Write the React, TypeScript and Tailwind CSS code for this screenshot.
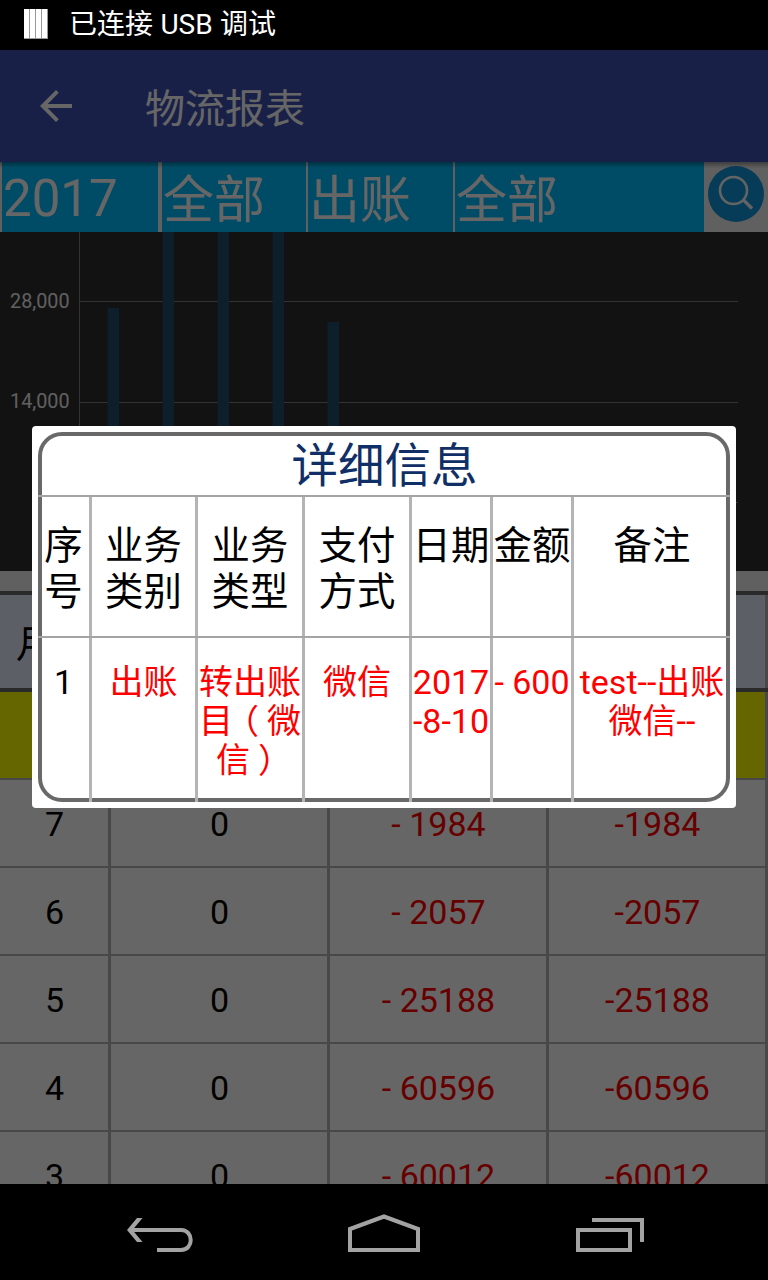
import React from 'react';

const rows = [
  ['7', '0', '- 1984', '-1984'],
  ['6', '0', '- 2057', '-2057'],
  ['5', '0', '- 25188', '-25188'],
  ['4', '0', '- 60596', '-60596'],
  ['3', '0', '- 60012', '-60012'],
];

const headers = [
  { lines: ['序', '号'], w: 'w-[54px]' },
  { lines: ['业务', '类别'], w: 'w-[106px]' },
  { lines: ['业务', '类型'], w: 'w-[107px]' },
  { lines: ['支付', '方式'], w: 'w-[107px]' },
  { lines: ['日期'], w: 'w-[81px]' },
  { lines: ['金额'], w: 'w-[81px]' },
  { lines: ['备注'], w: 'w-[156px]' },
];

const detail = [
  { lines: ['1'], w: 'w-[54px]' },
  { lines: ['出账'], w: 'w-[106px]' },
  { lines: ['转出账', '目（微', '信）'], w: 'w-[107px]' },
  { lines: ['微信'], w: 'w-[107px]' },
  { lines: ['2017', '-8-10'], w: 'w-[81px]' },
  { lines: ['- 600'], w: 'w-[81px]' },
  { lines: ['test--出账', '微信--'], w: 'w-[156px]' },
];

function StatusBar() {
  return (
    <div className="flex h-[50px] shrink-0 items-center bg-black pb-0.5 pl-6 text-[28px] text-white">
      <svg width="24" height="30" className="mr-[21px]">
        {[0, 6, 12, 18].map((x) => (
          <g key={x}>
            <rect x={x} y="0" width="6" height="30" fill="#999" />
            <rect x={x} y="0" width="5" height="29" fill="#fff" />
          </g>
        ))}
      </svg>
      <span className="whitespace-pre [word-spacing:0.5px] pt-px">已连接 USB 调试</span>
    </div>
  );
}

function AppBar() {
  return (
    <div className="flex h-28 shrink-0 items-center bg-[#3f51b5] pl-10 text-white">
      <svg width="32" height="32" viewBox="0 0 32 32" className="mr-[73px]">
        <path d="M32 14H7.7L18.8 2.8L16 0L0 16L16 32L18.8 29.2L7.7 18H32Z" fill="#fff" />
      </svg>
      <span className="pt-2 text-[40px] leading-none">物流报表</span>
    </div>
  );
}

function Filters() {
  return (
    <div className="relative flex h-[70px] shrink-0 bg-[#efefef] text-[51px] leading-[70px] text-white">
      <div className="ml-0.5 w-[156px] bg-[#00bfff] pl-px pt-0.5">2017</div>
      <div className="ml-1 w-36 bg-[#00bfff] pl-px pt-[4px]">全部</div>
      <div className="ml-0.5 w-[145px] bg-[#00bfff] pl-px pt-[4px]">出账</div>
      <div className="ml-0.5 w-[249px] bg-[#00bfff] pl-px pt-[4px]">全部</div>
      <svg width="64" height="70" viewBox="0 0 64 70">
        <circle cx="32" cy="32" r="28" fill="#1296db" />
        <circle cx="29.5" cy="28.5" r="13.5" fill="none" stroke="#f4f8fb" strokeWidth="2.6" />
        <path d="M39.5 38L48 46.5" stroke="#f4f8fb" strokeWidth="3.2" />
      </svg>
      <div className="absolute inset-x-0 top-0 h-1.5 bg-gradient-to-b from-black/35 to-transparent" />
    </div>
  );
}

function Chart() {
  return (
    <svg width="768" height="339" className="shrink-0 bg-[#2d2d2d]">
      <g stroke="#808080" strokeWidth="1">
        <path d="M79.5 0V339M80 69.5H738M80 170.5H738M80 270.5H738" />
      </g>
      <g fill="#254e6e">
        <rect x="107.5" y="76" width="11.5" height="263" />
        <rect x="162.5" y="0" width="11.5" height="339" />
        <rect x="217.5" y="0" width="11.5" height="339" />
        <rect x="272.5" y="0" width="11.5" height="339" />
        <rect x="327.5" y="90" width="11.5" height="249" />
      </g>
      <g fill="#f0f0f0" fontSize="19.8" textAnchor="end">
        <text x="69.5" y="76">28,000</text>
        <text x="69.5" y="176">14,000</text>
      </g>
    </svg>
  );
}

function Report() {
  return (
    <div className="flex min-h-0 grow flex-col overflow-hidden bg-white text-[34px]">
      <div className="h-5 shrink-0 bg-[#efefef]" />
      <div className="flex h-[101px] shrink-0 border-y-4 border-[#696969] bg-[#e6edff]">
        <div className="w-[110px] pl-4 pt-px text-[38px] leading-[96px]">月</div>
        <div className="grow border-r-[3px] border-[#b4b4b4]" />
      </div>
      <div className="flex h-[88px] shrink-0 border-b-2 border-[#b4b4b4] bg-[#ffff00]">
        <div className="grow border-r-[3px] border-[#b4b4b4]" />
      </div>
      {rows.map((r) => (
        <div key={r[0]} className="flex h-[88px] shrink-0 border-b-2 border-[#b4b4b4] text-center leading-[88px]">
          <div className="w-[111px] border-r-[3px] border-[#b4b4b4] pl-px">{r[0]}</div>
          <div className="w-[219px] border-r-[3px] border-[#b4b4b4] pl-px">{r[1]}</div>
          <div className="w-[219px] border-r-[3px] border-[#b4b4b4] pl-px text-[#ff0000]">{r[2]}</div>
          <div className="w-[219px] border-r-[3px] border-[#b4b4b4] pl-px text-[#ff0000]">{r[3]}</div>
        </div>
      ))}
    </div>
  );
}

// Full-width brackets sit in the middle of their character cell.
function Bracketed({ text }: { text: string }) {
  return (
    <span>
      {Array.from(text).map((c, i) => {
        if (c === '（') return <span key={i} className="inline-block -translate-x-2 translate-y-px">{c}</span>;
        if (c === '）') return <span key={i} className="inline-block translate-x-2 translate-y-px">{c}</span>;
        return c;
      })}
    </span>
  );
}

function DetailDialog() {
  return (
    <div className="h-[382px] w-[704px] rounded-[4px] bg-white p-1.5">
      <div className="flex h-[370px] flex-col rounded-[24px] border-4 border-[#696969]">
        <div className="-mx-1 h-[61px] shrink-0 border-b-2 border-[#a4a4a4] pl-px text-center text-[46.5px] leading-[60px] text-[#0f2f66]">
          详细信息
        </div>
        <div className="-mx-1 flex h-[141px] shrink-0 border-b-2 border-[#a4a4a4] text-center text-[38.4px] leading-[46px] text-black">
          {headers.map((h, i) => (
            <div
              key={i}
              className={`${h.w} shrink-0 whitespace-nowrap pt-[26px] ${i < 6 ? 'border-r-[3px] border-[#b4b4b4]' : ''}`}
            >
              {h.lines.map((l) => (
                <div key={l} className="flex justify-center">{l}</div>
              ))}
            </div>
          ))}
        </div>
        <div className="-mx-1 -mb-1 flex min-h-0 grow text-center text-[34px] leading-[39px] text-[#ff0000]">
          {detail.map((h, i) => (
            <div
              key={i}
              className={`${h.w} shrink-0 whitespace-nowrap pt-[25px] ${i === 0 ? 'text-black' : ''} ${i < 6 ? 'border-r-[3px] border-[#b4b4b4]' : ''}`}
            >
              {h.lines.map((l) => (
                <div key={l} className="flex justify-center">
                  <Bracketed text={l} />
                </div>
              ))}
            </div>
          ))}
        </div>
      </div>
    </div>
  );
}

function NavBar() {
  return (
    <div className="h-24 shrink-0 bg-black">
      <svg width="768" height="96" fill="none" stroke="#a3a3a3" strokeWidth="4">
        <path d="M130 46H181C194 46 194 66 181 66H157" />
        <path d="M127 46L137 34H142.5L132.5 46L142.5 58H137Z" fill="#a3a3a3" stroke="none" />
        <path d="M350 66V45L384 32.5L418 45V66Z" />
        <path d="M578 46H630V66H578ZM592 36H642V58" />
      </svg>
    </div>
  );
}

export default function App() {
  return (
    <div className="flex h-[1280px] w-[768px] flex-col overflow-hidden bg-black font-['Roboto','Noto_Sans_CJK_SC',sans-serif]">
      <StatusBar />
      <div className="relative flex h-[1134px] shrink-0 flex-col overflow-hidden">
        <AppBar />
        <Filters />
        <Chart />
        <Report />
        <div className="absolute inset-0 flex items-center justify-center bg-black/60">
          <DetailDialog />
        </div>
      </div>
      <NavBar />
    </div>
  );
}
